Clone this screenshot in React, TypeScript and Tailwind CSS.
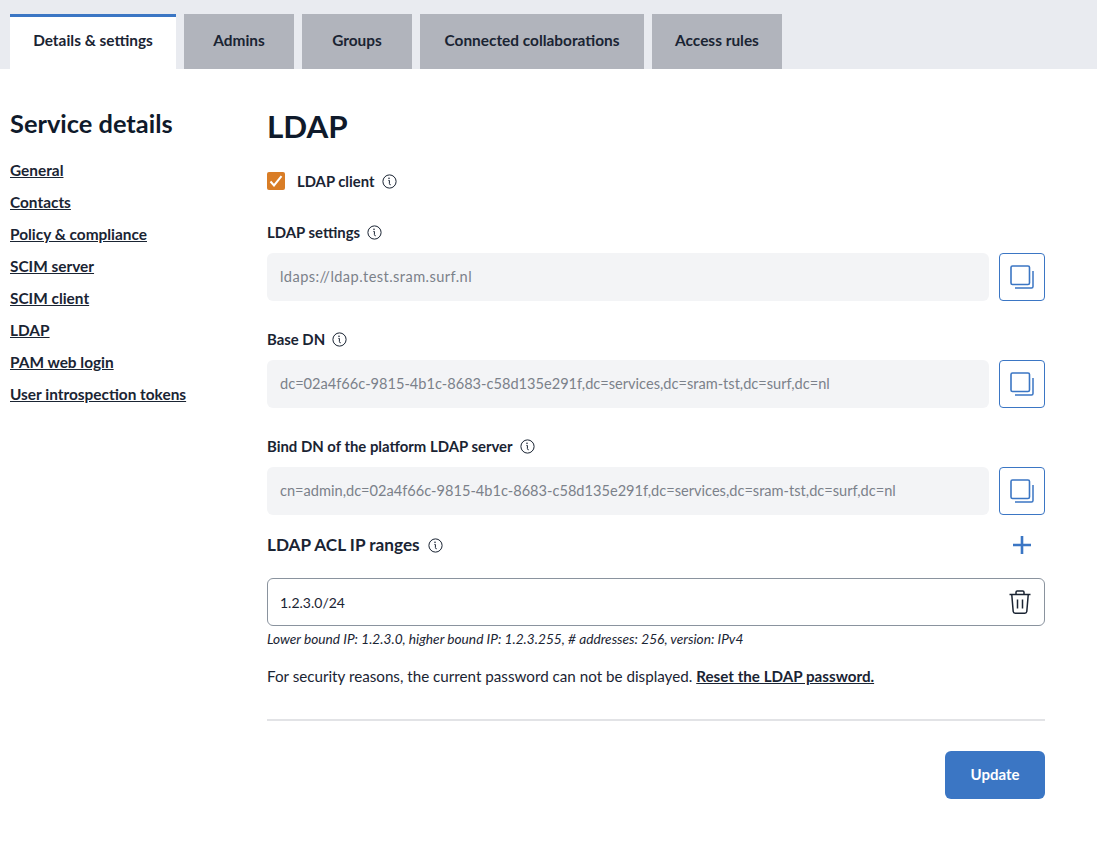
import React from "react";

const font = "font-['Lato','Noto_Sans',sans-serif]";

function Info() {
  return (
    <svg width="15" height="15" viewBox="0 0 15 15" fill="none" className="shrink-0">
      <circle cx="7.5" cy="7.5" r="6.6" stroke="#1a2433" strokeWidth="1" />
      <path d="M6.4 6.4h1v3.2q0 1.2 1.3 1.2" stroke="#1a2433" strokeWidth="1" />
      <circle cx="7" cy="4.2" r="0.8" fill="#1a2433" />
    </svg>
  );
}

function Copy() {
  return (
    <button className="w-[46px] h-[48px] shrink-0 rounded-[4px] border border-[#3b76c4] bg-white flex items-center justify-center">
      <svg width="26" height="26" viewBox="0 0 26 26" fill="none">
        <path d="M6 24h16.5a1.5 1.5 0 0 0 1.5-1.5V7" stroke="#3b76c4" strokeWidth="1.5" />
        <rect x="2" y="2" width="18.5" height="18.5" rx="1.5" stroke="#3b76c4" strokeWidth="1.6" fill="#fff" />
      </svg>
    </button>
  );
}

function Field({ label, value, mb, valueClass }: { label: string; value: string; mb: string; valueClass?: string }) {
  return (
    <div className={mb}>
      <div className="flex items-center gap-[7px] h-[20px] mb-[11px]">
        <span className="text-[14.9px] font-bold text-[#1a2433] leading-5">{label}</span>
        <Info />
      </div>
      <div className="flex gap-[10px]">
        <div className={`flex-1 h-[48px] rounded-[6px] bg-[#f3f4f6] px-[13px] flex items-center text-[14.6px] text-[#7b818a] whitespace-nowrap overflow-hidden ${valueClass ?? ""}`}>
          {value}
        </div>
        <Copy />
      </div>
    </div>
  );
}

const tabs = ["Details & settings", "Admins", "Groups", "Connected collaborations", "Access rules"];
const widths = ["w-[166px]", "w-[110px]", "w-[110px]", "w-[224px]", "w-[130px]"];
const links = ["General", "Contacts", "Policy & compliance", "SCIM server", "SCIM client", "LDAP", "PAM web login", "User introspection tokens"];

export default function App() {
  return (
    <div className={`${font} w-[1097px] h-[846px] bg-white text-[#1a2433] overflow-hidden`}>
      <div className="h-[69px] bg-[#e9ebf0] pt-[14px] pl-[10px] flex gap-[8px]">
        {tabs.map((t, i) => (
          <div
            key={t}
            className={`${widths[i]} h-[55px] flex items-center justify-center text-[15.4px] font-bold ${
              i === 0 ? "bg-white border-t-[3px] border-[#3b76c4] pb-[5px]" : "bg-[#b1b4bc] pb-[2px]"
            }`}
          >
            {t}
          </div>
        ))}
      </div>
      <div className="flex pl-[10px]">
        <aside className="w-[257px] pt-[38px]">
          <h2 className="text-[25.4px] font-bold leading-[32px] mb-[21px] text-[#0f1a2b]">Service details</h2>
          <nav className="flex flex-col gap-[12px]">
            {links.map((l) => (
              <a key={l} className="text-[15.4px] font-bold underline leading-5">
                {l}
              </a>
            ))}
          </nav>
        </aside>
        <main className="w-[778px] pt-[37px]">
          <h1 className="text-[31.4px] font-bold leading-[40px] mb-[25px] text-[#0f1a2b]">LDAP</h1>
          <div className="flex items-center h-[20px] mb-[31px]">
            <span className="w-[18px] h-[18px] rounded-[2px] bg-[#d97d26] flex items-center justify-center mr-[12px]">
              <svg width="14" height="12" viewBox="0 0 14 12" fill="none">
                <path d="M1.5 6.5 5 10.5 12.5 1.2" stroke="#fff" strokeWidth="2" />
              </svg>
            </span>
            <span className="text-[14.8px] font-bold leading-5 mr-[8px]">LDAP client</span>
            <Info />
          </div>
          <Field label="LDAP settings" value="ldaps://ldap.test.sram.surf.nl" mb="mb-[28px]" valueClass="tracking-[0.43px]" />
          <Field label="Base DN" value="dc=02a4f66c-9815-4b1c-8683-c58d135e291f,dc=services,dc=sram-tst,dc=surf,dc=nl" mb="mb-[28px]" />
          <Field label="Bind DN of the platform LDAP server" value="cn=admin,dc=02a4f66c-9815-4b1c-8683-c58d135e291f,dc=services,dc=sram-tst,dc=surf,dc=nl" mb="mb-[15px]" />
          <div className="flex items-center h-[30px] mb-[18px]">
            <span className="text-[17.2px] font-bold mr-[8px]">LDAP ACL IP ranges</span>
            <Info />
            <svg width="18" height="18" viewBox="0 0 18 18" className="ml-auto mr-[14px]" fill="none">
              <path d="M9 0v18M0 9h18" stroke="#3b76c4" strokeWidth="2.6" />
            </svg>
          </div>
          <div className="h-[48px] rounded-[6px] border border-[#8a939e] px-[12px] flex items-center justify-between text-[14px]">
            <span>1.2.3.0/24</span>
            <svg width="24" height="26" viewBox="0 0 24 26" fill="none" stroke="#1a2433" strokeWidth="1.5">
              <path d="M1.5 5.5h21M8 5V3.2A1.2 1.2 0 0 1 9.2 2h5.6A1.2 1.2 0 0 1 16 3.2V5" />
              <path d="M3.8 6l1.4 16.5a2 2 0 0 0 2 1.7h9.6a2 2 0 0 0 2-1.7L20.2 6" />
              <path d="M9.5 10.5v9M14.5 10.5v9" />
            </svg>
          </div>
          <p className="text-[13.7px] italic leading-4 mt-[5px] mb-[19px] whitespace-nowrap">
            Lower bound IP: 1.2.3.0, higher bound IP: 1.2.3.255, # addresses: 256, version: IPv4
          </p>
          <p className="text-[15.2px] leading-5">
            For security reasons, the current password can not be displayed.{" "}
            <a className="font-bold underline">Reset the LDAP password.</a>
          </p>
          <hr className="border-0 h-[2px] bg-[#e2e3e6] mt-[33px] mb-[30px]" />
          <div className="flex justify-end">
            <button className="w-[100px] h-[48px] rounded-[6px] bg-[#3b76c4] text-white text-[15px] font-bold pb-[2px]">Update</button>
          </div>
        </main>
      </div>
    </div>
  );
}
